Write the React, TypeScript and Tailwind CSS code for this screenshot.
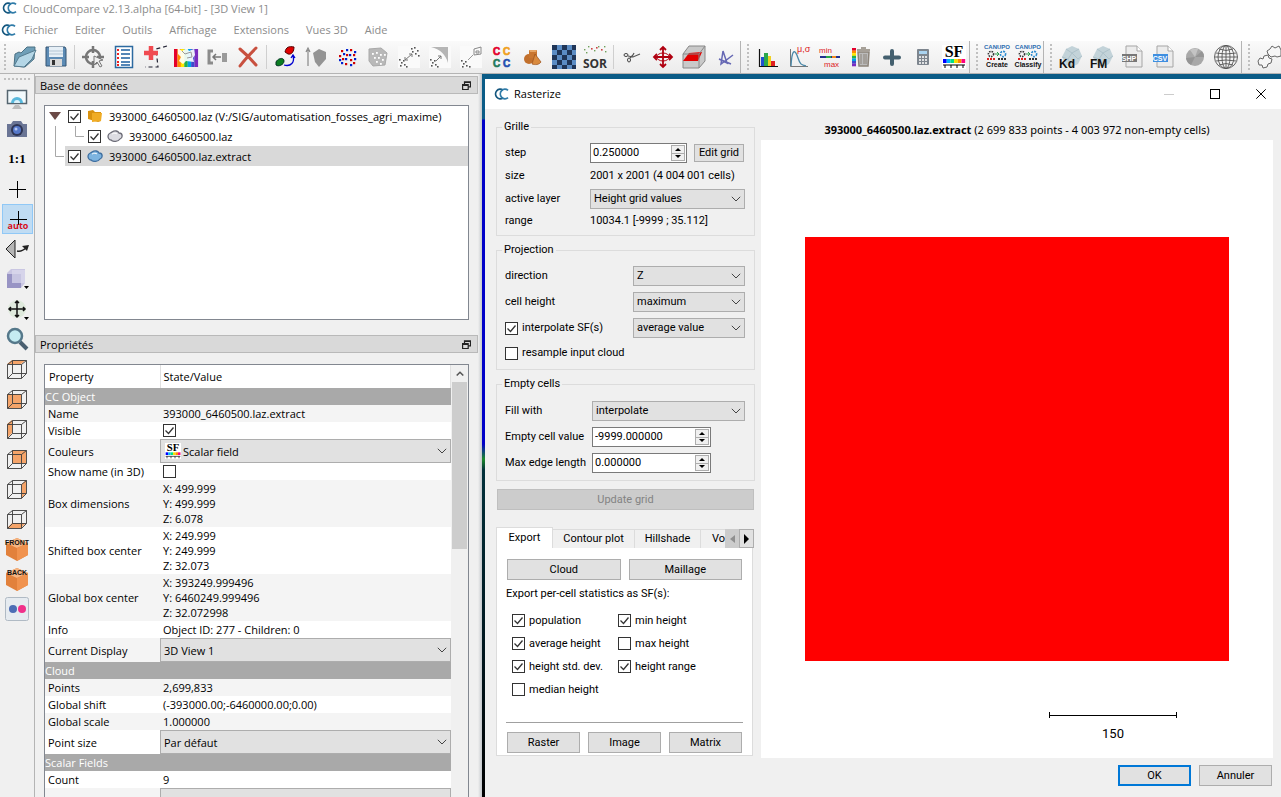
import type { ReactNode } from 'react';

type IconProps = { children: ReactNode; size?: string };

function Icon({ children, size = 'w-6 h-6' }: IconProps) {
  return (
    <svg viewBox="0 0 24 24" fill="none" className={`${size} shrink-0 overflow-visible`} aria-hidden="true">
      {children}
    </svg>
  );
}

function Logo() {
  return (
    <svg viewBox="0 0 15 12" className="w-[15px] h-3 shrink-0" fill="none" aria-hidden="true">
      <path d="M9 2.200A4.600 4.800 0 1 0 9 9.800" stroke="#15577f" strokeWidth="1.800" />
      <path d="M14 2.400A4.600 4.800 0 1 0 14 9.600" stroke="#2f7ba8" strokeWidth="1.800" />
    </svg>
  );
}

const dots = (list: number[][], fill: string, r = 0.9) =>
  list.map(([x, y]) => <rect key={`${x}-${y}`} x={x} y={y} width={r * 2} height={r * 2} fill={fill} />);

const rainbow = ['#e4002b', '#ff8a00', '#ffe600', '#22b14c', '#00a2e8', '#3f48cc', '#7a2bbf'];

function SfIcon({ size }: { size?: string }) {
  return (
    <Icon size={size}>
      <rect width="24" height="24" fill="#fff" />
      <text x="12" y="12" fontSize="16" fontWeight="700" textAnchor="middle" fill="#000" fontFamily="Liberation Serif, serif">SF</text>
      {['#0000ff', '#00b4ff', '#00e08a', '#f5e000', '#ff8a00', '#ff0080'].map((c, i) => (
        <rect key={c} x={1 + i * 3.7} y="14" width="3.700" height="4" fill={c} />
      ))}
      <path d="M1 20h22M3 20v3M9 20v3M15 20v3M21 20v3" stroke="#000" />
    </Icon>
  );
}

function Rock({ label }: { label: string }) {
  return (
    <Icon>
      <path d="M3 12 7 4l6-3 7 3 3 7-4 8-6 3-6-2z" fill="#c3d3d9" />
      <path d="m7 4 6 4 7-4M13 8l-4 6-6-2M13 8l6 6 4-3M9 14l4 8" stroke="#aec2ca" />
      <text x="0" y="23" fontSize="12" fontWeight="700" fill="#111" fontFamily="Liberation Sans, sans-serif">{label}</text>
    </Icon>
  );
}

function FileIcon({ label, color }: { label: string; color: string }) {
  return (
    <Icon>
      <path d="M5 1h11l5 5v16H5z" fill="#ececec" stroke="#a5a5a5" />
      <path d="M16 1v5h5" fill="#fff" stroke="#a5a5a5" />
      <rect x="1" y="9" width="15" height="8" fill={color} />
      <text x="8" y="16" fontSize="7" fontWeight="700" textAnchor="middle" fill="#fff" fontFamily="Liberation Sans, sans-serif">{label}</text>
    </Icon>
  );
}

function Canupo({ label }: { label: string }) {
  return (
    <Icon>
      <text x="12" y="4" fontSize="6" fontWeight="700" textAnchor="middle" fill="#2b6cb0" fontFamily="Liberation Sans, sans-serif">CANUPO</text>
      <circle cx="6" cy="9" r="2.600" stroke="#333" strokeWidth="1.600" strokeDasharray="1.500 1" />
      <path d="M10 9h4m-2-2 2 2-2 2" stroke="#2a9d4a" />
      <circle cx="18" cy="9" r="2.600" stroke="#2b8bd0" strokeWidth="1.600" strokeDasharray="2 1" />
      <path d="M2 14h8" stroke="#d22" strokeWidth="2" strokeDasharray="2 1" />
      <path d="M13 14h9" stroke="#333" strokeWidth="2" strokeDasharray="2 1" />
      <text x="12" y="22" fontSize="7" fontWeight="700" textAnchor="middle" fill="#111" fontFamily="Liberation Sans, sans-serif">{label}</text>
    </Icon>
  );
}

const fileTools = [
  {
    name: 'Open',
    icon: (
      <Icon>
        <path d="M1 21 2 9l4-2 2 1 6-6 8 0-1 12-9 8z" fill="#6f9fb8" stroke="#4a7083" />
        <path d="M1 21 6 12 23 5l-4 9-8 8z" fill="#b4d6e6" stroke="#567c90" />
      </Icon>
    ),
  },
  {
    name: 'Save',
    icon: (
      <Icon>
        <path d="M2 2h19l1 2v17H2z" fill="#5c8bb5" stroke="#345573" />
        <path d="M5 2h14v10H5z" fill="#e6eff6" />
        <path d="M5 6h14M5 9h14" stroke="#b3c5d4" />
        <path d="M6 14h12v7H6z" fill="#d9d9d9" />
        <path d="M8 15h3v5H8z" fill="#333" />
      </Icon>
    ),
  },
];

const editTools = [
  {
    name: 'Pick rotation center',
    icon: (
      <Icon>
        <circle cx="12" cy="12" r="7" stroke="#777" strokeWidth="2.500" />
        <path d="M12 1v7M12 16v7M1 12h7M16 12h7" stroke="#777" strokeWidth="2.500" />
        <path d="m13 11 9 4-4 1 3 5-2 1-3-5-3 3z" fill="#eee" stroke="#777" />
      </Icon>
    ),
  },
  {
    name: 'Point list',
    icon: (
      <Icon>
        <rect x="3.500" y="1.500" width="17" height="21" fill="#fff" stroke="#2c6aa0" strokeWidth="1.500" />
        {dots([[5, 4], [5, 8], [5, 12], [5, 16], [5, 19]], '#e22', 1)}
        <path d="M9 5h9M9 9h9M9 13h9M9 17h9M9 20h9" stroke="#1c5fa0" strokeWidth="1.500" />
      </Icon>
    ),
  },
  {
    name: 'Point picking',
    icon: (
      <Icon>
        <path d="M24 1 13 4l2 18H2" stroke="#223" strokeDasharray="4 3" strokeWidth="1.200" />
        <path d="M8 1v14M1 8h14" stroke="#f04a50" strokeWidth="4.500" />
      </Icon>
    ),
  },
  {
    name: 'Colorize',
    icon: (
      <Icon>
        {rainbow.map((c, i) => (
          <rect key={c} x={i * 3.43} y="4" width="3.500" height="18" fill={c} />
        ))}
        <path d="m4 3 4 3 5-3 2 3 5-2 1 6-2 3 1 4-8-1-3 3-4-3 2-4-3-3z" fill="#fff" opacity=".9" />
        <path d="m8 6 3 3 6-2 1 5-5 1" stroke="#999" />
      </Icon>
    ),
  },
  {
    name: 'Merge',
    icon: (
      <Icon>
        <path d="M8 6H4v12h4" stroke="#8b8b8b" strokeWidth="3" />
        <rect x="17" y="8" width="5" height="9" fill="#9a9a9a" />
        <path d="M16 12H8m3-3-3 3 3 3" stroke="#777" strokeWidth="1.500" />
      </Icon>
    ),
  },
  {
    name: 'Delete',
    icon: (
      <Icon>
        <path d="M4 4c6 5 11 10 16 16M20 3C14 9 9 14 4 21" stroke="#c8503f" strokeWidth="3" strokeLinecap="round" />
      </Icon>
    ),
  },
];

const cloudTools = [
  {
    name: 'Apply transformation',
    icon: (
      <Icon>
        <path d="M12 7c1-5 4-6 9-5 0 4-2 8-6 7z" fill="#e00000" stroke="#500" />
        <path d="M3 17c2-4 8-5 8-1 0 4-6 6-8 4z" fill="#0a7d20" stroke="#032" />
        <path d="M11 20c7 2 11-3 9-9m-2 2 2-3 2 3" stroke="#0000d0" strokeWidth="1.300" />
      </Icon>
    ),
  },
  {
    name: 'Compute normals',
    icon: (
      <Icon>
        <path d="M4 21V5M2 7l2-4 2 4" stroke="#888" strokeWidth="1.200" />
        <path d="m9 8 6-4 7 3 0 7-7 8-4-5z" fill="#949494" />
      </Icon>
    ),
  },
  {
    name: 'Subsample points',
    icon: (
      <Icon>
        {dots([[6, 5], [15, 4], [4, 10], [11, 9], [18, 9], [7, 13], [15, 14], [10, 18], [18, 17]], '#d00000', 1.1)}
        {dots([[11, 4], [8, 8], [19, 6], [14, 9], [4, 14], [10, 13], [19, 13], [6, 17], [15, 19]], '#0020d0', 1.1)}
      </Icon>
    ),
  },
  {
    name: 'Sample on mesh',
    icon: (
      <Icon>
        <path d="m3 4 12-1 6 5-2 12-12 1-4-5z" fill="#b9b9b9" stroke="#a9a9a9" />
        {dots([[6, 8], [10, 7], [14, 9], [18, 9], [8, 12], [12, 12], [16, 14], [10, 16], [14, 18]], '#fff', 0.9)}
      </Icon>
    ),
  },
  {
    name: 'Cloud to cloud distance',
    icon: (
      <Icon>
        <rect x="1" y="1" width="22" height="22" fill="#fafafa" />
        {dots([[2, 14], [4, 17], [3, 20], [7, 19], [9, 21], [6, 15], [14, 3], [17, 2], [20, 5], [18, 8], [21, 10], [15, 6]], '#555', 0.8)}
        <path d="m8 15 7-6m-3 0h3v3M8 12v3h3" stroke="#777" />
      </Icon>
    ),
  },
  {
    name: 'Cloud to mesh distance',
    icon: (
      <Icon>
        <rect x="1" y="1" width="22" height="22" fill="#fafafa" />
        <path d="M3 2h17v16c-2-8-8-14-17-16z" fill="#b5b5b5" />
        {dots([[2, 14], [4, 17], [3, 20], [7, 19], [9, 21], [6, 15]], '#555', 0.8)}
        <path d="m8 16 5-5m-3 0h3v3" stroke="#777" />
      </Icon>
    ),
  },
  {
    name: 'Cloud to primitive distance',
    icon: (
      <Icon>
        <rect x="1" y="1" width="22" height="22" fill="#fafafa" />
        <path d="m15 4 7-2v7l-7 1zM17 6h3v2h-3z" stroke="#888" />
        {dots([[2, 15], [4, 18], [3, 21], [7, 20], [10, 21], [6, 16]], '#555', 0.8)}
        <path d="m9 15 5-5" stroke="#999" />
      </Icon>
    ),
  },
  {
    name: 'Label connected components',
    icon: (
      <Icon>
        <g fontSize="10" fontWeight="700" strokeWidth=".600" fontFamily="Liberation Sans, sans-serif">
          <text x="3" y="10" fill="#e4002b" stroke="#e4002b">C</text>
          <text x="13" y="10" fill="#f0a020" stroke="#f0a020">C</text>
          <text x="3" y="22" fill="#1f7a5c" stroke="#1f7a5c">C</text>
          <text x="13" y="22" fill="#1f4fb0" stroke="#1f4fb0">C</text>
        </g>
      </Icon>
    ),
  },
  {
    name: 'Primitive factory',
    icon: (
      <Icon>
        <circle cx="8" cy="14" r="5" fill="#c2702c" />
        <path d="M8 5h8v8H8z" fill="#c9762f" />
        <path d="M8 5h8l-1 2H9z" fill="#e5a463" />
        <path d="m14 9 6 8c-2 3-6 3-9 2z" fill="#d98a3d" stroke="#9a4f18" strokeWidth=".700" />
      </Icon>
    ),
  },
  {
    name: 'Checkerboard',
    icon: (
      <Icon>
        <rect width="24" height="24" fill="#1f3557" />
        <path d="M5 0h5v5H5zM15 0h5v5h-5zM0 5h5v5H0zM10 5h5v5h-5zM20 5h4v5h-4zM5 10h5v5H5zM15 10h5v5h-5zM0 15h5v5H0zM10 15h5v5h-5zM20 15h4v5h-4zM5 20h5v4H5zM15 20h5v4h-5z" fill="#5b8cc4" />
      </Icon>
    ),
  },
  {
    name: 'SOR filter',
    icon: (
      <Icon>
        {dots([[1, 4], [5, 1], [11, 5], [15, 1], [21, 1], [22, 6], [3, 7]], '#6fa05a', 0.7)}
        {dots([[8, 3], [18, 4], [13, 2]], '#c44', 0.8)}
        <text x="12" y="23" fontSize="12" fontWeight="700" textAnchor="middle" fill="#333" fontFamily="Open Sans, sans-serif">SOR</text>
      </Icon>
    ),
  },
];

const transformTools = [
  {
    name: 'Segment',
    icon: (
      <Icon>
        <ellipse cx="6" cy="10" rx="2" ry="1.500" stroke="#444" />
        <ellipse cx="9" cy="15" rx="1.500" ry="2" stroke="#444" />
        <path d="m8 11 5 1 7-3M10 13l3-3 1-2" stroke="#555" strokeWidth="1.200" />
      </Icon>
    ),
  },
  {
    name: 'Translate / rotate',
    icon: (
      <Icon>
        <path d="M12 2v20M9 5l3-3 3 3M9 19l3 3 3-3M3 12h18M6 9l-3 3 3 3M18 9l3 3-3 3" stroke="#b00010" strokeWidth="1.800" />
        <ellipse cx="12" cy="12" rx="6" ry="4" stroke="#b00010" />
      </Icon>
    ),
  },
  {
    name: 'Cross section',
    icon: (
      <Icon>
        <path d="M7 1h16v15l-6 7H1V9z" fill="#c9c9c9" stroke="#888" />
        <path d="m7 8 13-1-4 9H1z" fill="#e00000" />
        <path d="M1 9h16v14M17 9l6-8" stroke="#888" />
      </Icon>
    ),
  },
  {
    name: 'Trace polyline',
    icon: (
      <Icon>
        <path d="m6 14 8 4-4-12-2 13 12-9M6 14l12 5" stroke="#6668b4" strokeWidth="1.500" />
      </Icon>
    ),
  },
];

const sfTools = [
  {
    name: 'Histogram',
    icon: (
      <Icon>
        <path d="M3.500 4v17.500H22" stroke="#111" strokeWidth="1.200" />
        <path d="M5 12h3v9H5z" fill="#1f4fd0" />
        <path d="M8 8h4v13H8z" fill="#2aa84a" />
        <path d="M12 11h3v10h-3z" fill="#f0d020" />
        <path d="M15 16h4v5h-4z" fill="#e02020" />
      </Icon>
    ),
  },
  {
    name: 'Statistical parameters',
    icon: (
      <Icon>
        <path d="M3.500 4v17.500H21" stroke="#777" />
        <path d="M4 21c1-18 4-17 7-8 2 6 3 7 8 8" stroke="#4a88a8" strokeWidth="1.300" />
        <text x="10" y="7" fontSize="9" fill="#d22" fontFamily="Liberation Sans, sans-serif">μ,σ</text>
      </Icon>
    ),
  },
  {
    name: 'Filter by value',
    icon: (
      <Icon>
        <g fontSize="8" fill="#d22" fontFamily="Liberation Sans, sans-serif">
          <text x="1" y="8">min</text>
          <text x="6" y="22">max</text>
        </g>
        <path d="M2 12h20" stroke="#223090" strokeWidth="2" />
        <path d="M8 12h5" stroke="#2aa84a" strokeWidth="2" />
        <path d="M14 12h4" stroke="#f08a20" strokeWidth="2" />
      </Icon>
    ),
  },
  {
    name: 'Delete scalar field',
    icon: (
      <Icon>
        {rainbow.map((c, i) => (
          <rect key={c} x="3" y={3 + i * 2.6} width="4" height="2.700" fill={c} />
        ))}
        <path d="M9 7h11l-1 14h-9zM8 5h13M12 3h5" fill="#bbb" stroke="#8c847a" strokeWidth="1.500" />
        <path d="M12 9v10M15 9v10M17 9v10" stroke="#8c847a" />
      </Icon>
    ),
  },
  {
    name: 'Add constant SF',
    icon: (
      <Icon>
        <path d="M12 6v13M5 12.500h14" stroke="#44606f" strokeWidth="4" strokeLinecap="round" />
      </Icon>
    ),
  },
  {
    name: 'SF arithmetic',
    icon: (
      <Icon>
        <rect x="6" y="4" width="12" height="16" rx="1" fill="#7d858e" />
        <rect x="8" y="6" width="8" height="3" fill="#a9d3f0" />
        <path d="M8 12h8M8 15h8M8 18h8" stroke="#fff" strokeWidth="1.500" strokeDasharray="2 1" />
      </Icon>
    ),
  },
  { name: 'SF from color', icon: <SfIcon /> },
];

const canupoTools = [
  { name: 'Canupo create', icon: <Canupo label="Create" /> },
  { name: 'Canupo classify', icon: <Canupo label="Classify" /> },
];

const pluginTools = [
  { name: 'Kd facets', icon: <Rock label="Kd" /> },
  { name: 'FM facets', icon: <Rock label="FM" /> },
  { name: 'Export SHP', icon: <FileIcon label="SHP" color="#777777" /> },
  { name: 'Export CSV', icon: <FileIcon label="CSV" color="#3f8fe0" /> },
  {
    name: 'Classify by orientation',
    icon: (
      <Icon>
        <circle cx="12" cy="12" r="9" fill="#a8a8a8" />
        <path d="m12 12 7-6a9 9 0 0 1 2 6zM12 12l-4 8a9 9 0 0 1-5-7z" fill="#959595" />
        <path d="m12 12-5-7a9 9 0 0 1 8-1z" fill="#c4c4c4" />
      </Icon>
    ),
  },
  {
    name: 'Stereogram',
    icon: (
      <Icon>
        <g stroke="#555" strokeWidth=".900">
          <circle cx="12" cy="12" r="11.500" />
          <ellipse cx="12" cy="12" rx="8" ry="11.500" />
          <ellipse cx="12" cy="12" rx="4" ry="11.500" />
          <path d="M12 1v22M1 12h22M2 8q10 2 20 0M2 16q10-2 20 0M5 4q7 3 14 0M5 20q7-3 14 0" />
        </g>
      </Icon>
    ),
  },
];

const gearTools = [
  {
    name: 'Plugins',
    icon: (
      <Icon>
        <path d="m1 16 2-3 3 1 1-3 4-1 1 3 3 1-1 4-3 1-1 3-4 1-1-3-3 0zM11 9l-1-3 3-2 2-3 3 2 4-2 2 4v6l-4 1-2-1-4 1z" fill="#f6f6f6" stroke="#666" />
      </Icon>
    ),
  },
];

function CubeFace({ face }: { face: string }) {
  return (
    <Icon>
      <path d={face} fill="#f5a469" />
      <path d="M2.500 7.500h14v14h-14zM7.500 3.500h14v13h-14zM2.500 7.500l5-4M16.500 7.500l5-4M16.500 21.500l5-5M2.500 21.500l5-5" stroke="#3c3c3c" strokeWidth=".900" />
    </Icon>
  );
}

function OrangeCube({ label }: { label: string }) {
  return (
    <Icon>
      <path d="m12 1 11 5v12l-11 6-11-6V6z" fill="#e2813c" />
      <path d="m1 6 11 5 11-5-11-5z" fill="#f6b582" />
      <path d="M12 11v13l11-6V6z" fill="#f0924e" />
      <text x="12" y="8" fontSize="7" fontWeight="700" textAnchor="middle" fill="#111" fontFamily="Liberation Sans, sans-serif">{label}</text>
    </Icon>
  );
}

const viewTools = [
  {
    name: 'Display settings',
    icon: (
      <Icon>
        <rect x="2.500" y="3.500" width="19" height="13" fill="#f2fafd" stroke="#55656f" strokeWidth="1.500" />
        <path d="M6 16a6 6 0 0 1 12 0z" fill="#58b8dc" />
        <path d="M9 16a3 3 0 0 1 6 0z" fill="#d9f1fa" />
        <path d="M10 18h4l3 4H7z" fill="#bdbdbd" />
      </Icon>
    ),
  },
  {
    name: 'Camera',
    icon: (
      <Icon>
        <path d="M2 7h4l2-3h8l2 3h4v13H2z" fill="#6a7595" />
        <circle cx="12" cy="13" r="6" fill="#2e3554" />
        <circle cx="12" cy="13" r="4" fill="#5577c8" />
        <circle cx="11" cy="12" r="1.500" fill="#b6c8f2" />
      </Icon>
    ),
  },
  {
    name: 'Zoom 1:1',
    icon: (
      <Icon>
        <text x="12" y="16" fontSize="13" fontWeight="700" textAnchor="middle" fill="#000" fontFamily="Liberation Serif, serif">1:1</text>
      </Icon>
    ),
  },
  {
    name: 'Pick center',
    icon: (
      <Icon>
        <path d="M12.500 4v17M4 12.500h17" stroke="#000" />
      </Icon>
    ),
  },
  {
    name: 'Auto pick center',
    active: true,
    icon: (
      <Icon>
        <path d="M13.500 4v14M5 12.500h17" stroke="#000" />
        <text x="13" y="22" fontSize="9" fontWeight="700" textAnchor="middle" fill="#d8101c" fontFamily="Open Sans, sans-serif">auto</text>
      </Icon>
    ),
  },
  {
    name: 'Level',
    icon: (
      <Icon>
        <path d="M1 12 10 3v18z" fill="#b5b5b5" stroke="#222" />
        <path d="M12 14c4 1 7-1 10-4" stroke="#222" strokeWidth="1.300" />
        <path d="m17 9 7-1-2 6z" fill="#222" />
      </Icon>
    ),
  },
  {
    name: 'Projection mode',
    icon: (
      <Icon>
        <path d="M2 6 6 2h14v14l-4 5H2z" fill="#c9c6e2" />
        <path d="M2 7h14v14H2z" fill="#9894c4" />
        <path d="M7 3h13v13H7z" fill="#dcdaee" opacity=".7" />
        <path d="M19 19h5l-2.500 3z" fill="#000" />
      </Icon>
    ),
  },
  {
    name: 'Interaction mode',
    icon: (
      <Icon>
        <circle cx="12" cy="12" r="9" fill="#dfeadd" />
        <path d="M12 4v16M4 12h16M10 6l2-2 2 2M10 18l2 2 2-2M6 10l-2 2 2 2M18 10l2 2-2 2" stroke="#111" strokeWidth="1.500" />
        <path d="M19 20h5l-2.500 3z" fill="#000" />
      </Icon>
    ),
  },
  {
    name: 'Zoom',
    icon: (
      <Icon>
        <path d="m15 15 7 7" stroke="#4a5f70" strokeWidth="4" />
        <circle cx="10" cy="9" r="7" fill="#c5ecf2" stroke="#55788a" strokeWidth="2.500" />
      </Icon>
    ),
  },
  { name: 'Top view', icon: <CubeFace face="M2 7h14l5-4H7z" /> },
  { name: 'Front view', icon: <CubeFace face="M2 7h14v14H2z" /> },
  { name: 'Left view', icon: <CubeFace face="M2 7l5-4v13l-5 5z" /> },
  { name: 'Back view', icon: <CubeFace face="M7 3h14v13H7z" /> },
  { name: 'Right view', icon: <CubeFace face="M17 7l4-4v13l-4 5z" /> },
  { name: 'Bottom view', icon: <CubeFace face="M2 21h14l5-5H7z" /> },
  { name: 'Iso front', icon: <OrangeCube label="FRONT" /> },
  { name: 'Iso back', icon: <OrangeCube label="BACK" /> },
  {
    name: 'Stereo',
    icon: (
      <Icon>
        <rect x=".5" y=".5" width="23" height="23" rx="2" fill="#e6ebf0" stroke="#b0bac4" />
        <circle cx="8" cy="12" r="4" fill="#4c6db5" />
        <circle cx="17" cy="12" r="4" fill="#f0308a" />
      </Icon>
    ),
  },
];

function Tools({ items }: { items: { name: string; icon: ReactNode }[] }) {
  return (
    <>
      {items.map((t) => (
        <button key={t.name} aria-label={t.name} className="w-[31px] h-8 shrink-0 flex items-center justify-center">
          {t.icon}
        </button>
      ))}
    </>
  );
}

function Separator() {
  return <div className="w-[6px] h-6 shrink-0 flex justify-center"><div className="w-px bg-[#cfcfcf]" /></div>;
}

function Handle({ first = false }: { first?: boolean }) {
  return (
    <div className={`h-full shrink-0 flex items-center ${first ? 'w-[9px] pl-1' : 'w-3 pl-[6px] border-l border-[#b4b4b4]'}`}>
      <div className="h-[26px] border-l-2 border-dotted border-[#c0c0c0]" />
    </div>
  );
}

function CheckBox({ checked = false, label, hideLabel = false }: { checked?: boolean; label: string; hideLabel?: boolean }) {
  return (
    <label className="flex items-center gap-1 whitespace-nowrap">
      <span className="grid w-[13px] h-[13px] shrink-0">
        <input
          type="checkbox"
          defaultChecked={checked}
          aria-label={label}
          className="peer appearance-none w-[13px] h-[13px] bg-white border border-[#333] [grid-area:1/1]"
        />
        <svg viewBox="0 0 13 13" fill="none" className="w-[13px] h-[13px] pointer-events-none [grid-area:1/1] invisible peer-checked:visible">
          <path d="m2.500 6.500 3 3 5-6" stroke="#333" strokeWidth="1.300" />
        </svg>
      </span>
      {!hideLabel && <span>{label}</span>}
    </label>
  );
}

function Select({ id, value, className, icon }: { id: string; value: string; className: string; icon?: ReactNode }) {
  return (
    <div className={`grid items-center bg-[#e1e1e1] border border-[#adadad] ${className}`}>
      {icon && <span className="[grid-area:1/1] pl-1">{icon}</span>}
      <select id={id} aria-label={id} className={`[grid-area:1/1] appearance-none w-full h-full outline-none ${icon ? 'pl-[22px]' : 'pl-[3px]'}`}>
        <option>{value}</option>
      </select>
      <svg viewBox="0 0 10 6" fill="none" className="[grid-area:1/1] justify-self-end w-[10px] h-[6px] mr-[3px] pointer-events-none">
        <path d="m.8.8 4.200 4.200L9.200.8" stroke="#444" />
      </svg>
    </div>
  );
}

function SpinBox({ id, value, className }: { id: string; value: string; className: string }) {
  return (
    <div className={`flex h-5 bg-white border border-[#7a7a7a] ${className}`}>
      <input id={id} type="text" defaultValue={value} className="w-0 flex-1 pl-[2px] outline-none" />
      <div className="w-[14px] my-px mr-px flex flex-col border border-[#adadad] bg-[#f0f0f0]">
        <button aria-label="increase" className="flex-1 flex items-center justify-center border-b border-[#adadad]">
          <svg viewBox="0 0 6 3" className="w-[6px] h-[3px]"><path d="M0 3h6L3 0z" /></svg>
        </button>
        <button aria-label="decrease" className="flex-1 flex items-center justify-center">
          <svg viewBox="0 0 6 3" className="w-[6px] h-[3px]"><path d="M0 0h6L3 3z" /></svg>
        </button>
      </div>
    </div>
  );
}

function PushButton({ children, className = '' }: { children: ReactNode; className?: string }) {
  return (
    <button className={`h-[21px] bg-[#e1e1e1] border border-[#adadad] flex items-center justify-center ${className}`}>
      {children}
    </button>
  );
}

function DockTitle({ title }: { title: string }) {
  return (
    <div className="h-[18px] shrink-0 flex items-center justify-between pl-1 pr-[6px] bg-[#d9d9d9] border border-[#b9b9b9]">
      <h2>{title}</h2>
      <button aria-label={`Float ${title}`}>
        <svg viewBox="0 0 9 9" fill="none" className="w-[9px] h-[9px]">
          <path d="M2.500 3V.8h6v5H6.300M.6 3.500h5.600v5H.6zM.6 4.300h5.600M2.500 1.300h6" stroke="#222" strokeWidth="1.200" />
        </svg>
      </button>
    </div>
  );
}

function CloudIcon({ fill, stroke }: { fill: string; stroke: string }) {
  return (
    <svg viewBox="0 0 16 12" className="w-4 h-3 shrink-0" aria-hidden="true">
      <path d="M1 6c0-3 3-3 4-4 3-2 6-1 7 1 4 0 4 5 1 6-2 3-7 3-9 1C2 10 1 8 1 6z" fill={fill} stroke={stroke} strokeWidth="1.300" />
      <path d="M5 4c2-1 4-1 5 0" stroke="#fff" fill="none" />
    </svg>
  );
}

type Row = { label: string; value?: string[]; kind?: 'section' | 'check' | 'select'; checked?: boolean; sf?: boolean };

const rows: Row[] = [
  { label: 'CC Object', kind: 'section' },
  { label: 'Name', value: ['393000_6460500.laz.extract'] },
  { label: 'Visible', kind: 'check', checked: true },
  { label: 'Couleurs', kind: 'select', value: ['Scalar field'], sf: true },
  { label: 'Show name (in 3D)', kind: 'check' },
  { label: 'Box dimensions', value: ['X: 499.999', 'Y: 499.999', 'Z: 6.078'] },
  { label: 'Shifted box center', value: ['X: 249.999', 'Y: 249.999', 'Z: 32.073'] },
  { label: 'Global box center', value: ['X: 393249.999496', 'Y: 6460249.999496', 'Z: 32.072998'] },
  { label: 'Info', value: ['Object ID: 277 - Children: 0'] },
  { label: 'Current Display', kind: 'select', value: ['3D View 1'] },
  { label: 'Cloud', kind: 'section' },
  { label: 'Points', value: ['2,699,833'] },
  { label: 'Global shift', value: ['(-393000.00;-6460000.00;0.00)'] },
  { label: 'Global scale', value: ['1.000000'] },
  { label: 'Point size', kind: 'select', value: ['Par défaut'] },
  { label: 'Scalar Fields', kind: 'section' },
  { label: 'Count', value: ['9'] },
  { label: 'Active', kind: 'select', value: ['Coord. Z'] },
];

const shaded = ['Name', 'Couleurs', 'Box dimensions', 'Global box center', 'Current Display', 'Points', 'Global scale', 'Active'];

function PropertyRow({ row }: { row: Row }) {
  if (row.kind === 'section') {
    return (
      <tr className="h-[17px] bg-[#a9a9a9] text-white">
        <th colSpan={2} className="font-normal text-left">{row.label}</th>
      </tr>
    );
  }
  return (
    <tr className={`${row.kind === 'select' ? 'h-6' : 'h-[17px]'} ${shaded.includes(row.label) ? 'bg-[#f4f4f4]' : 'bg-white'}`}>
      <td className="pl-[3px] whitespace-nowrap">{row.label}</td>
      <td className={row.kind === 'select' ? '' : 'pl-[3px] py-px'}>
        {row.kind === 'check' && <CheckBox label={row.label} checked={row.checked} hideLabel />}
        {row.kind === 'select' && (
          <Select id={row.label} value={row.value![0]} className="h-6" icon={row.sf && <SfIcon size="w-4 h-4" />} />
        )}
        {!row.kind && row.value!.map((v) => <div key={v}>{v}</div>)}
      </td>
    </tr>
  );
}

function DatabaseDock() {
  return (
    <ul aria-label="Base de données" className="mx-[9px] mt-[11px] mb-[15px] h-[215px] shrink-0 bg-white border border-[#828790]">
      <li className="h-5 flex items-center">
        <svg viewBox="0 0 20 20" className="w-5 h-5 shrink-0"><path d="M4 6h12l-6 8z" fill="#6b4a46" /></svg>
        <div className="pl-[3px] flex items-center gap-[6px]">
          <CheckBox label="393000_6460500.laz" checked hideLabel />
          <svg viewBox="0 0 16 14" className="w-4 h-[14px] shrink-0">
            <path d="m1 2 5-1 2 2 6 0v9l-3 1-10-3z" fill="#d9920f" />
            <path d="m5 4 10 0-1 8-9 1z" fill="#f0ac25" />
          </svg>
          <span className="whitespace-nowrap">393000_6460500.laz (V:/SIG/automatisation_fosses_agri_maxime)</span>
        </div>
      </li>
      <li className="h-5 flex items-center">
        <svg viewBox="0 0 40 20" fill="none" className="w-10 h-5 shrink-0"><path d="M10.500 0v20M30.500 0v10.500H39" stroke="#a8a8a8" /></svg>
        <div className="pl-[3px] flex items-center gap-[6px]">
          <CheckBox label="393000_6460500.laz cloud" checked hideLabel />
          <CloudIcon fill="#dcdce2" stroke="#6d6d78" />
          <span>393000_6460500.laz</span>
        </div>
      </li>
      <li className="h-5 flex items-center">
        <svg viewBox="0 0 20 20" fill="none" className="w-5 h-5 shrink-0"><path d="M10.500 0v10.500H19" stroke="#a8a8a8" /></svg>
        <div className="flex-1 h-5 pl-[3px] bg-[#d9d9d9] flex items-center gap-[6px]">
          <CheckBox label="393000_6460500.laz.extract" checked hideLabel />
          <CloudIcon fill="#7db4e0" stroke="#3f6fa0" />
          <span>393000_6460500.laz.extract</span>
        </div>
      </li>
    </ul>
  );
}

function PropertiesDock() {
  return (
    <div className="mx-[9px] mt-[11px] flex-1 min-h-0 overflow-hidden bg-white border border-b-0 border-[#828790] flex">
      <div className="flex-1 min-h-0">
        <table className="w-full table-fixed border-collapse">
          <thead>
            <tr className="h-[23px] text-left">
              <th className="w-[115px] pl-1 font-normal border-r border-[#e0e0e0]">Property</th>
              <th className="pl-[3px] font-normal border-r border-[#e0e0e0]">State/Value</th>
            </tr>
          </thead>
          <tbody>
            {rows.map((r) => (
              <PropertyRow key={r.label} row={r} />
            ))}
          </tbody>
        </table>
      </div>
      <div className="w-[17px] shrink-0 bg-[#f0f0f0] flex flex-col px-px">
        <button aria-label="Scroll up" className="h-[17px] flex items-center justify-center">
          <svg viewBox="0 0 8 5" fill="none" className="w-2 h-[5px]"><path d="m.7 4.500 3.300-3.300 3.300 3.300" stroke="#555" strokeWidth="1.500" /></svg>
        </button>
        <div className="h-[167px] bg-[#cdcdcd]" />
      </div>
    </div>
  );
}

function Group({ title, children, className }: { title: string; children: ReactNode; className: string }) {
  return (
    <fieldset className="min-w-0 border border-[#dcdcdc]">
      <legend className="ml-[5px] px-[2px] h-[14px]">{title}</legend>
      <div className={`pl-2 pr-[9px] ${className}`}>{children}</div>
    </fieldset>
  );
}

const stats = [
  { label: 'population', checked: true },
  { label: 'min height', checked: true },
  { label: 'average height', checked: true },
  { label: 'max height', checked: false },
  { label: 'height std. dev.', checked: true },
  { label: 'height range', checked: true },
  { label: 'median height', checked: false },
];

function Parameters() {
  return (
    <div className="w-[259px] shrink-0 pb-[2px] flex flex-col">
      <div className="flex flex-col gap-[7px]">
        <Group title="Grille" className="pt-[7px] pb-[3px]">
          <div className="h-6 flex items-center">
            <label htmlFor="step" className="w-[85px]">step</label>
            <SpinBox id="step" value="0.250000" className="w-[97px]" />
            <button className="ml-[7px] h-[18px] w-[50px] whitespace-nowrap bg-[#e1e1e1] border border-[#adadad] flex items-center justify-center">Edit grid</button>
          </div>
          <div className="h-[22px] flex items-center">
            <span className="w-[85px]">size</span>
            <span className="whitespace-nowrap">2001 x 2001 (4 004 001 cells)</span>
          </div>
          <div className="h-[23px] flex items-center">
            <label htmlFor="layer" className="w-[85px]">active layer</label>
            <Select id="layer" value="Height grid values" className="flex-1 h-5" />
          </div>
          <div className="h-[22px] flex items-center">
            <span className="w-[85px]">range</span>
            <span className="whitespace-nowrap">10034.1 [-9999 ; 35.112]</span>
          </div>
        </Group>
        <Group title="Projection" className="pt-[6px] pb-1">
          <div className="h-[26px] flex items-center">
            <label htmlFor="direction" className="w-32">direction</label>
            <Select id="direction" value="Z" className="flex-1 h-5" />
          </div>
          <div className="h-[26px] flex items-center">
            <label htmlFor="cellHeight" className="w-32">cell height</label>
            <Select id="cellHeight" value="maximum" className="flex-1 h-5" />
          </div>
          <div className="h-[26px] flex items-center">
            <div className="w-32"><CheckBox label="interpolate SF(s)" checked /></div>
            <Select id="interpolation" value="average value" className="flex-1 h-5" />
          </div>
          <div className="h-6 flex items-center">
            <CheckBox label="resample input cloud" />
          </div>
        </Group>
        <Group title="Empty cells" className="pt-[7px] pb-1">
          <div className="h-[26px] flex items-center">
            <label htmlFor="fill" className="w-[87px]">Fill with</label>
            <Select id="fill" value="interpolate" className="flex-1 h-5" />
          </div>
          <div className="h-[26px] flex items-center">
            <label htmlFor="emptyValue" className="w-[87px] whitespace-nowrap">Empty cell value</label>
            <SpinBox id="emptyValue" value="-9999.000000" className="w-[119px]" />
          </div>
          <div className="h-[26px] flex items-center">
            <label htmlFor="maxEdge" className="w-[87px] whitespace-nowrap">Max edge length</label>
            <SpinBox id="maxEdge" value="0.000000" className="w-[119px]" />
          </div>
        </Group>
      </div>
      <button disabled className="mt-2 mx-px h-[21px] bg-[#cccccc] border border-[#bfbfbf] text-[#838383]">Update grid</button>
      <div role="tablist" className="mt-[17px] h-[21px] flex items-end">
        <button role="tab" aria-selected="true" className="w-[57px] h-[21px] bg-white border border-b-0 border-[#dcdcdc]">Export</button>
        <button role="tab" className="w-[82px] h-[19px] whitespace-nowrap border border-l-0 border-b-0 border-[#dcdcdc]">Contour plot</button>
        <button role="tab" className="w-[66px] h-[19px] border border-l-0 border-b-0 border-[#dcdcdc]">Hillshade</button>
        <button role="tab" className="w-6 h-[19px] pl-[11px] text-left overflow-hidden border-t border-[#dcdcdc]">Volume</button>
        <button aria-label="Previous tab" disabled className="w-[14px] h-[19px] bg-[#cccccc] flex items-center justify-center">
          <svg viewBox="0 0 5 8" className="w-[5px] h-2"><path d="M5 0v8L0 4z" fill="#8f8f8f" /></svg>
        </button>
        <button aria-label="Next tab" className="w-[15px] h-[19px] bg-[#e1e1e1] border border-[#adadad] flex items-center justify-center">
          <svg viewBox="0 0 5 10" className="w-[5px] h-[10px]"><path d="M0 0v10l5-5z" /></svg>
        </button>
      </div>
      <div role="tabpanel" className="mr-[2px] bg-white border border-t-0 border-[#dcdcdc] pt-[11px] px-[9px] pb-[2px] flex flex-col">
        <div className="grid grid-cols-2 gap-2 px-px">
          <PushButton>Cloud</PushButton>
          <PushButton>Maillage</PushButton>
        </div>
        <p className="mt-[7px]">Export per-cell statistics as SF(s):</p>
        <div className="mt-2 ml-[6px] grid grid-cols-[106px_1fr] auto-rows-[23px] items-center">
          {stats.map((s) => (
            <CheckBox key={s.label} label={s.label} checked={s.checked} />
          ))}
        </div>
        <hr className="mt-[21px] border-[#a0a0a0]" />
        <div className="mt-[9px] px-px grid grid-cols-3 gap-2">
          <PushButton>Raster</PushButton>
          <PushButton>Image</PushButton>
          <PushButton>Matrix</PushButton>
        </div>
      </div>
    </div>
  );
}

function Preview() {
  return (
    <div className="flex-1 min-w-0 flex flex-col">
      <div className="h-5 flex items-center justify-center whitespace-nowrap font-['Noto_Sans',sans-serif]">
        <p><b>393000_6460500.laz.extract</b> (2 699 833 points - 4 003 972 non-empty cells)</p>
      </div>
      <div className="flex-1 bg-white px-11 pt-[97px] flex flex-col">
        <div className="aspect-square bg-[#ff0000]" />
        <div className="mt-[51px] mr-[52px] w-32 self-end text-center text-[13px] leading-4">
          <svg viewBox="0 0 128 6" fill="none" className="w-32 h-[6px] mb-2">
            <path d="M.5 0v6M127.500 0v6M0 3.500h128" stroke="#000" />
          </svg>
          150
        </div>
      </div>
    </div>
  );
}

function RasterizeDialog() {
  return (
    <section aria-label="Rasterize" className="flex-1 min-w-0 bg-[#f0f0f0] flex flex-col font-['Roboto','Noto_Sans',sans-serif] text-[11px] leading-[14px] text-black">
      <header className="h-[30px] shrink-0 bg-white flex items-center pl-[9px] pr-[15px] font-['Open_Sans',sans-serif]">
        <Logo />
        <h1 className="flex-1 pl-[5px]">Rasterize</h1>
        <div className="flex items-center gap-9">
          <button aria-label="Minimize" className="w-[10px] h-px bg-[#cccccc]" />
          <button aria-label="Maximize" className="w-[10px] h-[10px] border border-black" />
          <button aria-label="Close">
            <svg viewBox="0 0 10 10" fill="none" className="w-[10px] h-[10px]"><path d="m.3.3 9.400 9.400M9.700.3.3 9.700" stroke="#000" /></svg>
          </button>
        </div>
      </header>
      <div className="pt-[11px] pl-[11px] pr-2 flex gap-[6px]">
        <Parameters />
        <Preview />
      </div>
      <footer className="mt-[7px] pr-[9px] flex justify-end gap-2">
        <button className="w-[73px] h-[21px] bg-[#e1e1e1] border-2 border-[#0078d7] flex items-center justify-center">OK</button>
        <PushButton className="w-[73px]">Annuler</PushButton>
      </footer>
    </section>
  );
}

const menus = ['Fichier', 'Editer', 'Outils', 'Affichage', 'Extensions', 'Vues 3D', 'Aide'];

export default function App() {
  return (
    <div className="h-screen overflow-hidden flex flex-col bg-[#f0f0f0] font-['Open_Sans','Noto_Sans',sans-serif] text-[11px] leading-[15px] text-black">
      <header className="bg-white text-[#8c8c8c]">
        <div className="h-[18px] flex items-center gap-[6px] pl-[2px] pb-[2px]">
          <Logo />
          <span>CloudCompare v2.13.alpha [64-bit] - [3D View 1]</span>
        </div>
        <nav className="h-[23px] flex items-center pl-px">
          <Logo />
          <div className="flex gap-[17px] pl-2">
            {menus.map((m) => (
              <a key={m} href="#">{m}</a>
            ))}
          </div>
        </nav>
      </header>
      <div className="h-[33px] shrink-0 flex items-center bg-gradient-to-b from-[#fafafa] to-[#ececec] border-b border-[#b4b4b4] overflow-hidden">
        <Handle first />
        <Tools items={fileTools} />
        <Separator />
        <Tools items={editTools} />
        <Separator />
        <Tools items={cloudTools} />
        <Separator />
        <Tools items={transformTools} />
        <Handle />
        <Tools items={sfTools} />
        <Handle />
        <Tools items={canupoTools} />
        <Handle />
        <Tools items={pluginTools} />
        <Handle />
        <Tools items={gearTools} />
      </div>
      <main className="flex-1 min-h-0 flex">
        <aside className="w-[35px] shrink-0 border-r border-[#b4b4b4] flex flex-col items-center pt-1 overflow-hidden">
          <div className="w-[26px] border-t-2 border-dotted border-[#c0c0c0] mb-1" />
          {viewTools.map((t) => (
            <button
              key={t.name}
              aria-label={t.name}
              className={`w-[31px] h-[30px] shrink-0 flex items-center justify-center ${t.active ? 'bg-[#c0dcf3] border border-[#90c8f6]' : ''}`}
            >
              {t.icon}
            </button>
          ))}
        </aside>
        <div className="w-[443px] shrink-0 pt-[2px] flex flex-col">
          <DockTitle title="Base de données" />
          <DatabaseDock />
          <DockTitle title="Propriétés" />
          <PropertiesDock />
        </div>
        <div className="w-1 shrink-0 bg-gradient-to-r from-[#f0f0f0] to-[#c4c8cc]" />
        <div className="flex-1 min-w-0 flex bg-[#0b5c87]">
          <div className="w-[3px] shrink-0 bg-[linear-gradient(to_bottom,#0b5c87_0,#0b5c87_45px,#0000c8_46px,#0000c8_370px,#1b8a2a_385px,#02303a_396px,#001820_560px,#000_723px)]" />
          <div className="flex-1 min-w-0 pt-[5px] flex">
            <RasterizeDialog />
          </div>
        </div>
      </main>
    </div>
  );
}
